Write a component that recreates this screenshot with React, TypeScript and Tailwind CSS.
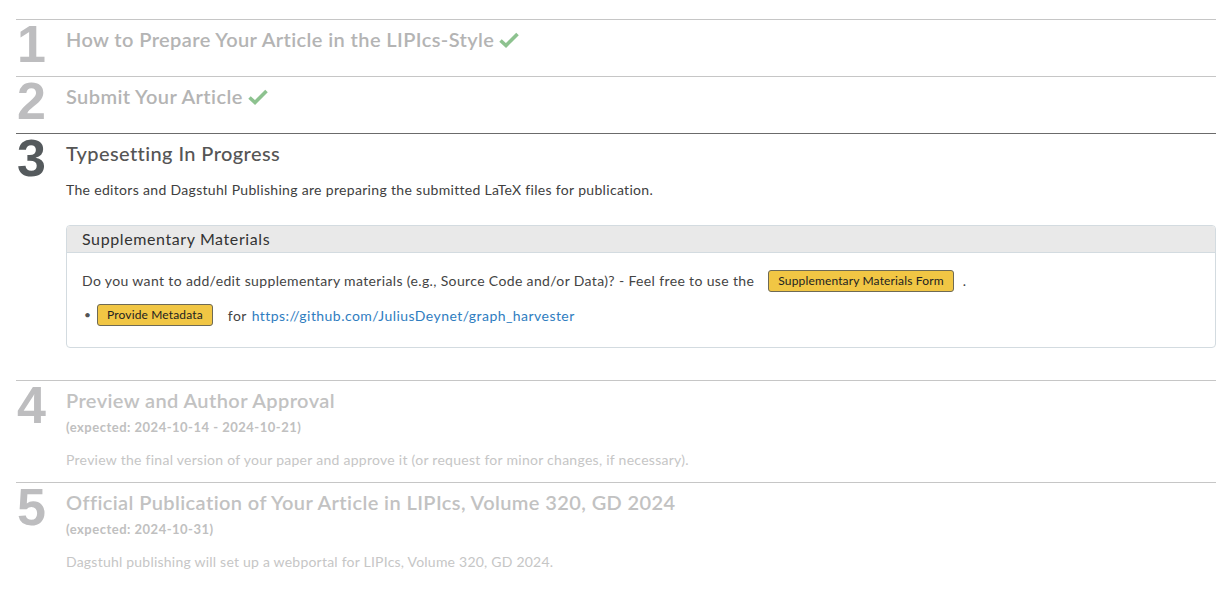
import React from 'react';

const Check: React.FC = () => (
  <svg viewBox="0 0 20 16" className="inline-block w-[20px] h-[16px] ml-[5px] -mt-[4px] align-middle">
    <path d="M1.5 8.5 L7 13.5 L18.5 2" fill="none" stroke="#8dc28f" strokeWidth="3.6" strokeLinecap="butt" strokeLinejoin="miter" />
  </svg>
);

type StepProps = {
  num: string;
  title: React.ReactNode;
  state: 'done' | 'active' | 'todo';
  dark?: boolean;
  children?: React.ReactNode;
};

const Step: React.FC<StepProps> = ({ num, title, state, dark, children }) => {
  const numColor = state === 'active' ? 'text-[#555a5d]' : 'text-[#bdbdbf]';
  const titleColor =
    state === 'active' ? 'text-[#555555] font-medium' : state === 'done' ? 'text-[#b4b4b4] font-semibold' : 'text-[#c2c2c2] font-semibold';
  return (
    <div className={`flex border-t ${dark ? 'border-[#6b6b6b]' : 'border-[#c6c6c6]'}`}>
      <div className={`w-[50px] shrink-0 -mt-[2px] font-['Liberation_Sans',Arial,sans-serif] font-bold text-[52px] leading-none pl-[1px] ${numColor}`}>
        {num}
      </div>
      <div className="flex-1 pt-[5px]">
        <h2 className={`text-[20px] leading-[28px] tracking-[0.4px] ${titleColor}`}>{title}</h2>
        {children}
      </div>
    </div>
  );
};

const YellowButton: React.FC<{ label: string }> = ({ label }) => (
  <button className="h-[22px] px-[9px] rounded-[3px] border border-[#6e6a55] bg-[#f1c644] text-[12px] leading-[20px] tracking-[0.15px] text-[#222]">
    {label}
  </button>
);

export default function App() {
  return (
    <div className="bg-white min-h-screen font-['Lato','Open_Sans',sans-serif] pt-[19px]">
      <div className="ml-[16px] w-[1200px]">
        <div className="h-[57px]">
          <Step num="1" state="done" title={<>How to Prepare Your Article in the LIPIcs-Style<Check /></>} />
        </div>
        <div className="h-[57px]">
          <Step num="2" state="done" title={<>Submit Your Article<Check /></>} />
        </div>

        <Step num="3" state="active" dark title="Typesetting In Progress">
          <p className="mt-[13px] text-[14px] leading-[20px] tracking-[0.32px] text-[#404040]">
            The editors and Dagstuhl Publishing are preparing the submitted LaTeX files for publication.
          </p>
          <div className="mt-[25px] mb-[32px] border border-[#d3dbe0] rounded-[4px] overflow-hidden">
            <div className="h-[27px] flex items-center px-[15px] bg-[#e9e9e9] border-b border-[#d3dbe0] text-[16px] tracking-[0.6px] text-[#333]">
              Supplementary Materials
            </div>
            <div className="px-[15px] pt-[16px] pb-[21px] text-[14px] tracking-[0.36px] text-[#444]">
              <div className="flex items-center h-[22px]">
                <span>Do you want to add/edit supplementary materials (e.g., Source Code and/or Data)? - Feel free to use the</span>
                <span className="ml-[14px]"><YellowButton label="Supplementary Materials Form" /></span>
                <span className="ml-[9px]">.</span>
              </div>
              <div className="flex items-center h-[22px] mt-[13px]">
                <span className="w-[15px] pl-[2px] text-[12px] text-[#555]">•</span>
                <YellowButton label="Provide Metadata" />
                <span className="ml-[15px]">for</span>
                <a href="#" className="ml-[5px] tracking-[0.45px] text-[#2f7dbf]">https://github.com/JuliusDeynet/graph_harvester</a>
              </div>
            </div>
          </div>
        </Step>

        <div className="h-[102px]">
          <Step num="4" state="todo" title="Preview and Author Approval">
            <p className="mt-[3px] text-[13px] leading-[20px] tracking-[0.5px] font-bold text-[#c0c0c0]">(expected: 2024-10-14 - 2024-10-21)</p>
            <p className="mt-[13px] text-[14px] leading-[20px] tracking-[0.27px] text-[#c6c6c6]">
              Preview the final version of your paper and approve it (or request for minor changes, if necessary).
            </p>
          </Step>
        </div>

        <Step num="5" state="todo" title="Official Publication of Your Article in LIPIcs, Volume 320, GD 2024">
          <p className="mt-[3px] text-[13px] leading-[20px] tracking-[0.5px] font-bold text-[#c0c0c0]">(expected: 2024-10-31)</p>
          <p className="mt-[13px] text-[14px] leading-[20px] tracking-[0.22px] text-[#c6c6c6]">
            Dagstuhl publishing will set up a webportal for LIPIcs, Volume 320, GD 2024.
          </p>
        </Step>
      </div>
    </div>
  );
}
